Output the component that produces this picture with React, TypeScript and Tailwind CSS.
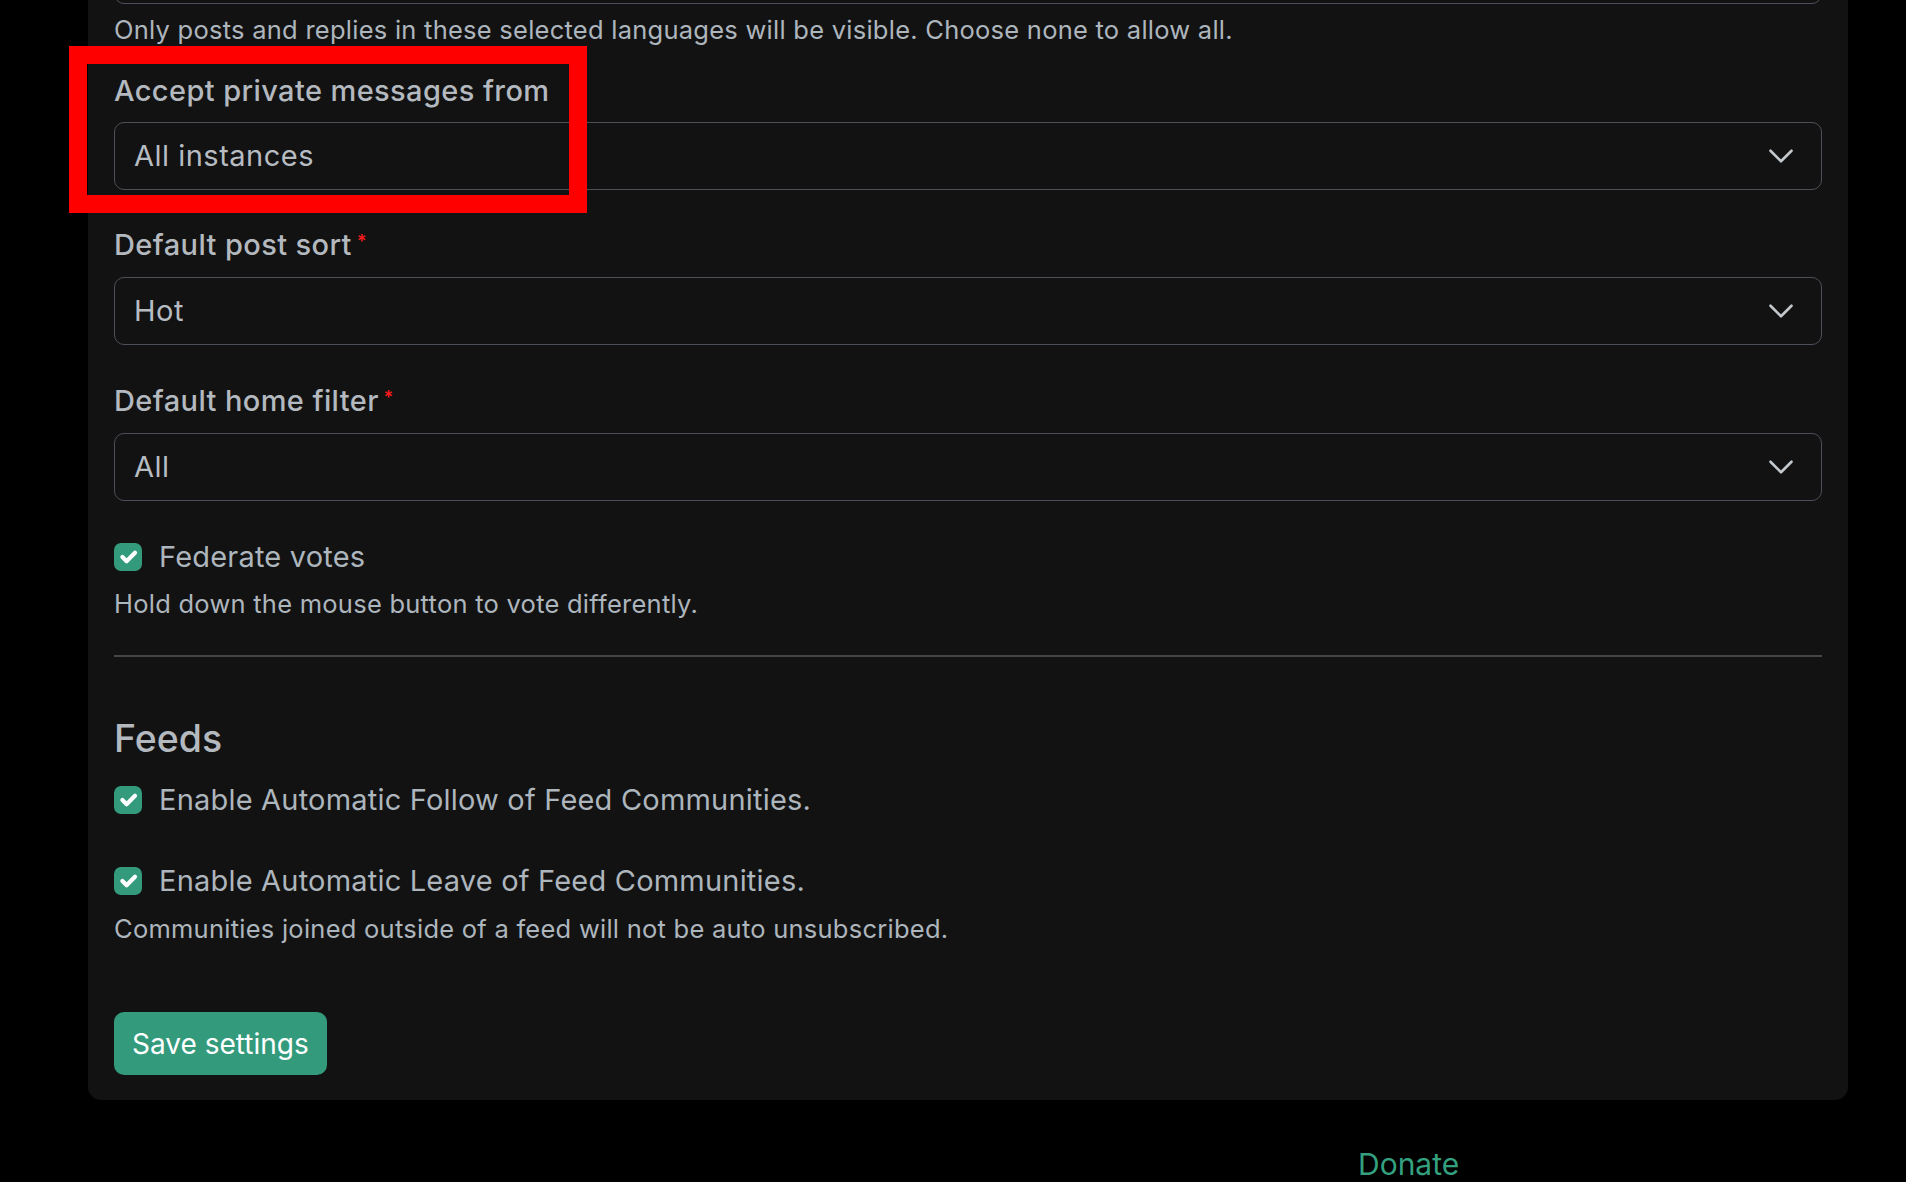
function Select({ value }: { value: string }) {
    return (
        <div className="flex h-[68px] items-center justify-between rounded-[10px] border border-[#4b5058] bg-[#121212] pl-[19px] pr-[26px] text-[29px] tracking-[0.5px] text-[#b7bcc2]">
            <span>{value}</span>
            <svg width="28" height="28" viewBox="0 0 16 16" fill="none">
                <path d="m2 5 6 6 6-6" stroke="#c3c8cd" strokeWidth="1.5" strokeLinecap="round" strokeLinejoin="round" />
            </svg>
        </div>
    );
}

function Box() {
    return (
        <span className="flex h-[28px] w-[28px] shrink-0 items-center justify-center rounded-[7px] bg-[#339a7c]">
            <svg width="28" height="28" viewBox="0 0 20 20" fill="none">
                <path d="m6 10 3 3 6-6" stroke="#fff" strokeWidth="3" strokeLinecap="round" strokeLinejoin="round" />
            </svg>
        </span>
    );
}

function Required() {
    return <span className="relative -top-[7px] ml-[5px] text-[18px] leading-none text-[#ff1a1a]">*</span>;
}

export default function App() {
    return (
        <div className="relative h-[1182px] overflow-hidden bg-black font-['Inter','Noto_Sans',sans-serif] text-[#adb5bd]">
            <div className="ml-[88px] flex w-[1760px] flex-col rounded-b-[13px] bg-[#121212] px-[26px] pb-[25px]">
                <div className="-mt-[64px] h-[68px] shrink-0 rounded-[10px] border border-[#4b5058]" />
                <p className="mt-[7px] text-[25.5px] leading-[37px] tracking-[0.25px]">
                    Only posts and replies in these selected languages will be visible. Choose none to allow all.
                </p>

                <label className="mt-[22px] text-[29px] font-medium leading-[42px] tracking-[0.4px] text-[#b3b9bf]">
                    Accept private messages from
                </label>
                <div className="mt-[10px]">
                    <Select value="All instances" />
                </div>

                <label className="mt-[34px] text-[29px] font-medium leading-[42px] tracking-[0.4px] text-[#b3b9bf]">
                    Default post sort
                    <Required />
                </label>
                <div className="mt-[11px]">
                    <Select value="Hot" />
                </div>

                <label className="mt-[35px] text-[29px] font-medium leading-[42px] tracking-[0.4px] text-[#b3b9bf]">
                    Default home filter
                    <Required />
                </label>
                <div className="mt-[11px]">
                    <Select value="All" />
                </div>

                <div className="mt-[35px] flex items-center gap-[17px] text-[29px] leading-[42px] tracking-[0.2px]">
                    <Box />
                    <span>Federate votes</span>
                </div>
                <p className="mt-[7px] text-[25.5px] leading-[37px] tracking-[0.25px]">Hold down the mouse button to vote differently.</p>

                <div className="mt-[33px] h-[2px] bg-[#454545]" />

                <h5 className="mt-[61px] text-[37.5px] font-medium leading-[42px] text-[#b3b9bf]">Feeds</h5>
                <div className="mt-[19px] flex items-center gap-[17px] text-[29px] leading-[42px] tracking-[0.2px]">
                    <Box />
                    <span>Enable Automatic Follow of Feed Communities.</span>
                </div>
                <div className="mt-[39px] flex items-center gap-[17px] text-[29px] leading-[42px] tracking-[0.2px]">
                    <Box />
                    <span>Enable Automatic Leave of Feed Communities.</span>
                </div>
                <p className="mt-[8px] text-[25.5px] leading-[37px] tracking-[0.25px]">
                    Communities joined outside of a feed will not be auto unsubscribed.
                </p>

                <div className="mt-[65px]">
                    <button className="h-[63px] rounded-[10px] bg-[#339a7c] px-[18px] text-[28px] text-white">Save settings</button>
                </div>
            </div>

            <div className="mt-[49px] pl-[1358px] text-[30px] leading-[30px] text-[#33a07f]">Donate</div>

            <div className="pointer-events-none absolute left-[69px] top-[46px] h-[167px] w-[518px] border-[18px] border-[#ff0000]" />
        </div>
    );
}
